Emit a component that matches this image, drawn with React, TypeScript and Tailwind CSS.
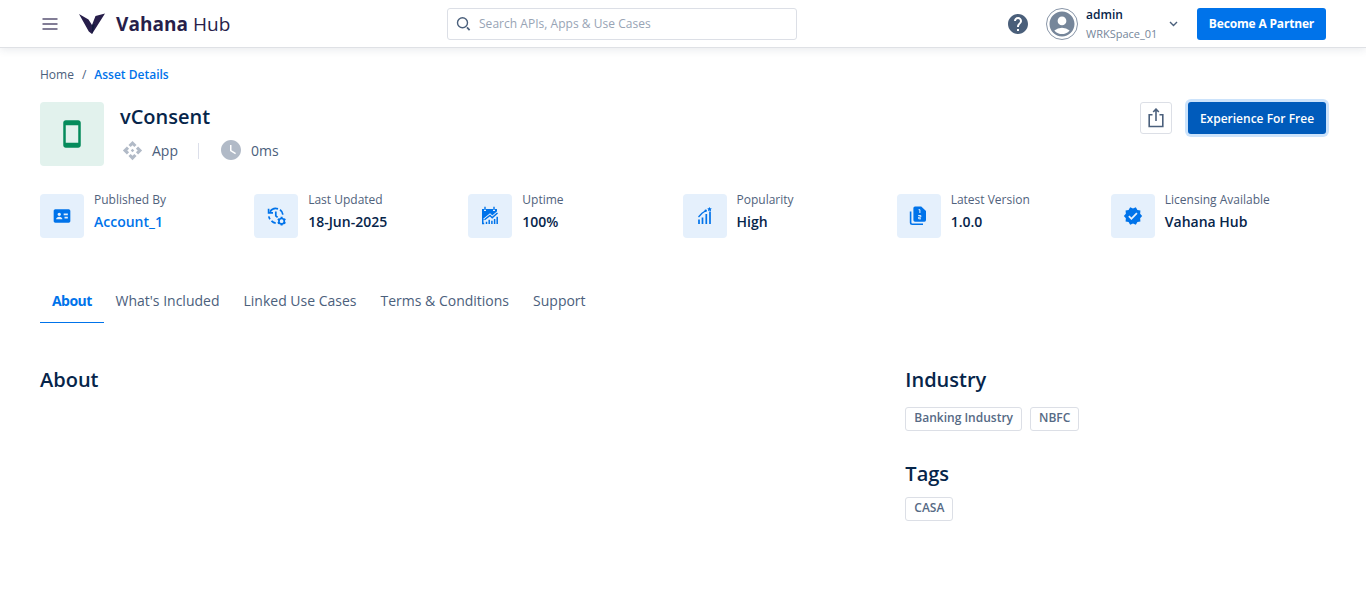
import type { ReactNode } from "react";
import { MdHelp, MdAccountCircle, MdApi, MdWatchLater, MdVerified, MdStayCurrentPortrait } from "react-icons/md";
import { BiSolidIdCard } from "react-icons/bi";

function Logo() {
  return (
    <svg width="26" height="22" viewBox="0 0 26 22" fill="#271e4a">
      <path d="M0 1 L9.5 6.5 L13 12 L16.5 3 L26 0.5 L13 21 L9.8 18.5 Z" />
      <path d="M13 12 L16 11 L13 21 Z" fill="#10183c" />
    </svg>
  );
}

function HistoryGearIcon() {
  return (
    <svg className="mt-0.5 ml-0.5" width="20" height="20" viewBox="0 0 20 20" fill="none" stroke="#0073ea" strokeWidth="1.7">
      <path d="M3 4.8A7 7 0 0 1 11 1.9M13 2.7A7 7 0 0 1 15.9 7.6" />
      <path d="M1.8 9.4A7.3 7.3 0 0 0 3 12.2M4.5 13.9A7.3 7.3 0 0 0 8.7 16.1" />
      <path d="M1.6 1.8V5.8H6" />
      <path d="M8.8 4.4V8.8L10.6 10.4" />
      <circle cx="14.6" cy="14.2" r="2.7" strokeWidth="1.7" />
      <path d="M14.6 9.8v1.6M14.6 17v1.6M10.8 12l1.4.8M17 15.6l1.4.8M10.8 16.4l1.4-.8M17 12.8l1.4-.8" strokeWidth="2" />
    </svg>
  );
}

function UptimeIcon() {
  return (
    <svg width="18" height="20" viewBox="0 0 18 20" fill="none">
      <path d="M1 3H3V5H5V3H12V5H14V3H16V7.2L11.5 11L9.5 9L2.5 14V18H1Z" fill="#0073ea" />
      <path d="M2.6 13.2L9 8L11.3 10.2L16.8 5.4" stroke="#e5f0fc" strokeWidth="1.2" />
      <g stroke="#0073ea">
        <path d="M4 .8V4M13 .8V4" strokeWidth="1.4" />
        <path d="M3.5 13.8L9 9.5L11.2 11.7L16.5 7" strokeWidth="1.4" />
        <path d="M1 17.5H3.2M5.5 18V15.8M8.2 18V13.8M10.9 18V14.8M13.6 18V13M16.2 18V10.8" strokeWidth="1.5" />
      </g>
    </svg>
  );
}

function PopularityIcon() {
  return (
    <svg width="16" height="18" viewBox="0 0 16 18" fill="none" stroke="#0073ea">
      <path d="M2 17V12.5M5.5 17V10.5M9.3 17V7M13 17V4.5" strokeWidth="1.7" />
      <path d="M1.5 10L5 6.2L8.7 3.8" strokeWidth="1.3" />
      <path d="M12.5 0l.7 1.2 1.6.3-1 1.1.2 1.6-1.5-.7-1.4.7.2-1.6-1.1-1.1 1.5-.3z" fill="#0073ea" stroke="none" />
      <circle cx="8.7" cy="3.8" r="1.2" fill="#0073ea" stroke="none" />
    </svg>
  );
}

function VersionIcon() {
  return (
    <svg className="mr-0.5" width="18" height="20" viewBox="0 0 18 20" fill="none">
      <path d="M1.6 5.5V16.5Q1.6 18.2 3.3 18.2H14" stroke="#0073ea" strokeWidth="1.6" />
      <path d="M6 .5H12.2L17 5V14Q17 15.7 15.4 15.7H6Q4.4 15.7 4.4 14V2.1Q4.4.5 6 .5Z" fill="#0073ea" />
      <path d="M9.6 3.7H10.9V7M9.2 9.5H11.8V11.1H9.7V12.8H12" stroke="#e5f1fd" strokeWidth="1" />
    </svg>
  );
}

function Fact({ icon, label, value, link }: { icon: ReactNode; label: string; value: string; link?: boolean }) {
  return (
    <div className="flex gap-2.5">
      <div className="flex size-11 shrink-0 items-center justify-center rounded bg-[#e5f0fc] text-[#0073ea]">{icon}</div>
      <div className="-mt-1 whitespace-nowrap">
        <div className="text-xs leading-5 text-[#50627c]">{label}</div>
        <div className={link ? "text-sm leading-6 font-semibold text-[#0073ea]" : "text-sm leading-6 font-semibold text-[#06254a]"}>{value}</div>
      </div>
    </div>
  );
}

function Tag({ children }: { children: ReactNode }) {
  return (
    <span className="h-6 rounded-[3px] border border-[#dcdfe6] px-2 text-xs leading-[20px] font-semibold whitespace-nowrap text-[#566a85]">{children}</span>
  );
}

const tabs = ["What's Included", "Linked Use Cases", "Terms & Conditions", "Support"];

export default function App() {
  return (
    <div className="h-[589px] overflow-hidden bg-white font-['Open_Sans',sans-serif] text-[#4b607c]">
      <header className="flex h-12 items-center border-b border-[#dfe1e5] pr-10 pl-[42px] shadow-[0_2px_8px_rgba(40,60,90,0.10)]">
        <svg width="16" height="14" viewBox="0 0 16 14" stroke="#5a5374" strokeWidth="1.5">
          <path d="M.5 2h15M.5 7h15M.5 12h15" />
        </svg>
        <div className="ml-[21px] flex items-center">
          <Logo />
          <span className="mt-px ml-[11px] w-[115px] text-[19px] leading-7 font-bold tracking-[0.05px] whitespace-nowrap text-[#271e4a]">
            Vahana <span className="font-normal">Hub</span>
          </span>
        </div>
        <div className="ml-[216px] flex h-8 w-[350px] items-center rounded-[3px] border border-[#dcdfe6] pl-2">
          <svg width="16" height="16" viewBox="0 0 16 16" fill="none" stroke="#4b607c" strokeWidth="1.4">
            <circle cx="6.5" cy="6.8" r="5" />
            <path d="M11 11.3l2.6 2.8" strokeWidth="1.7" />
          </svg>
          <span className="ml-[7px] text-xs tracking-[0.03px] text-[#98a4b5]">Search APIs, Apps &amp; Use Cases</span>
        </div>
        <div className="ml-auto flex items-center">
          <MdHelp size={24} color="#4a5f7a" />
          <div className="ml-4 flex size-8 items-center justify-center rounded-full border border-[#8996a8]">
            <MdAccountCircle size={30} color="#76869a" className="shrink-0" />
          </div>
          <div className="ml-2 w-[71px] whitespace-nowrap">
            <div className="text-xs leading-[19px] font-semibold text-[#06254a]">admin</div>
            <div className="text-[11px] leading-[19px] text-[#76869a]">WRKSpace_01</div>
          </div>
          <svg className="ml-3 mr-[19px]" width="9" height="6" viewBox="0 0 9 6" fill="none" stroke="#4b607c" strokeWidth="1.4">
            <path d="M1 1l3.5 3.5L8 1" />
          </svg>
          <button className="h-8 w-[129px] rounded-[3px] bg-[#0073ea] text-xs font-bold tracking-[-0.17px] whitespace-nowrap text-white">Become A Partner</button>
        </div>
      </header>

      <main className="px-10 pt-[17px]">
        <nav className="flex gap-2 text-xs leading-5">
          <span>Home</span>
          <span>/</span>
          <span className="font-semibold text-[#0073ea]">Asset Details</span>
        </nav>

        <section className="mt-[17px] flex h-16">
          <div className="flex size-16 items-center justify-center rounded bg-[#e2f2ed]">
            <MdStayCurrentPortrait size={30} color="#058b5b" />
          </div>
          <div className="ml-4">
            <h1 className="text-xl leading-[30px] font-semibold text-[#06254a]">vConsent</h1>
            <div className="mt-1.5 flex items-center text-sm leading-[26px]">
              <span className="-mt-0.5 flex size-6 items-center justify-center">
                <MdApi size={21} color="#b1bac7" />
              </span>
              <span className="ml-2">App</span>
              <span className="ml-5 h-4 w-px bg-[#dcdfea]" />
              <MdWatchLater size={24} color="#b1bac7" className="-mt-[3px] ml-5" />
              <span className="ml-2">0ms</span>
            </div>
          </div>
          <div className="ml-auto flex gap-4">
            <button className="flex size-8 items-center justify-center rounded-[3px] border border-[#dcdfe6]">
              <svg width="16" height="20" viewBox="0 0 16 20" fill="none" stroke="#4b607c" strokeWidth="1.6">
                <path d="M4.5 6.7H1.2V18.5H14.8V6.7H11.5M8 13V1.5M5.2 4L8 1.1L10.8 4" />
              </svg>
            </button>
            <button className="h-8 w-[138px] rounded-[3px] bg-[#005bbb] pt-0.5 text-xs font-semibold whitespace-nowrap text-white shadow-[0_0_0_3px_#cce3fb]">Experience For Free</button>
          </div>
        </section>

        <section className="mt-7 -mr-px grid w-[1285px] grid-cols-6">
          <Fact icon={<BiSolidIdCard size={20} />} label="Published By" value="Account_1" link />
          <Fact icon={<HistoryGearIcon />} label="Last Updated" value="18-Jun-2025" />
          <Fact icon={<UptimeIcon />} label="Uptime" value="100%" />
          <Fact icon={<PopularityIcon />} label="Popularity" value="High" />
          <Fact icon={<VersionIcon />} label="Latest Version" value="1.0.0" />
          <Fact icon={<MdVerified size={20} />} label="Licensing Available" value="Vahana Hub" />
        </section>

        <div className="mt-[42px] flex text-sm leading-[42px] whitespace-nowrap">
          <span className="h-[43px] w-[63.5px] border-b border-[#0073ea] px-3 font-bold tracking-[-0.55px] text-[#0073ea]">About</span>
          {tabs.map((t) => (
            <span key={t} className="px-3">{t}</span>
          ))}
        </div>

        <section className="mt-[42px] grid grid-cols-3 text-xl leading-[30px] font-semibold text-[#06254a]">
          <h2 className="col-span-2">About</h2>
          <div className="pl-2">
            <h2>Industry</h2>
            <div className="mt-3 flex gap-2">
              <Tag>Banking Industry</Tag>
              <Tag>NBFC</Tag>
            </div>
            <h2 className="mt-7">Tags</h2>
            <div className="mt-2 flex">
              <Tag>CASA</Tag>
            </div>
          </div>
        </section>
      </main>
    </div>
  );
}
